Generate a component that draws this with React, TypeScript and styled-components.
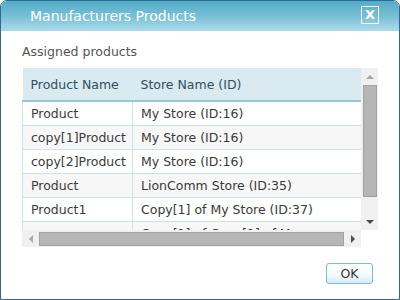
import styled, { createGlobalStyle } from "styled-components";

const GlobalStyle = createGlobalStyle`
  html, body {
    margin: 0;
    padding: 0;
    background: #ffffff;
  }
  body {
    font-family: "DejaVu Sans", Verdana, sans-serif;
  }
`;

const Dialog = styled.div`
  width: 400px;
  height: 300px;
  box-sizing: border-box;
  border: 1px solid #2f6890;
  border-radius: 7px 7px 0 0;
  overflow: hidden;
  display: flex;
  flex-direction: column;
  background: #ffffff;
`;

const TitleBar = styled.div`
  height: 30px;
  flex: none;
  display: flex;
  align-items: center;
  justify-content: space-between;
  padding: 0 20px 0 29px;
  background: linear-gradient(to bottom, #52abc6 0%, #7cc2d8 55%, #acdbea 100%);
`;

const Title = styled.span`
  color: #ffffff;
  font-size: 14px;
`;

const CloseButton = styled.button`
  width: 18px;
  height: 18px;
  padding: 0;
  margin: 0 0 2px 0;
  border: 1px solid #ffffff;
  background: transparent;
  color: #ffffff;
  font-family: "DejaVu Sans", sans-serif;
  font-weight: bold;
  font-size: 13px;
  line-height: 16px;
  text-align: center;
  cursor: pointer;
`;

const Body = styled.div`
  flex: 1;
  display: flex;
  flex-direction: column;
  padding: 13px 21px 0 21px;
`;

const Label = styled.div`
  font-size: 12.5px;
  line-height: 16px;
  color: #555555;
  margin-bottom: 8px;
`;

const GridFrame = styled.div`
  width: 356px;
  height: 179px;
  display: grid;
  grid-template-columns: 339px 17px;
  grid-template-rows: 162px 17px;
`;

const Viewport = styled.div`
  overflow: hidden;
  background: #ffffff;
`;

const Table = styled.table`
  border-collapse: collapse;
  width: 339px;
  table-layout: fixed;
  font-size: 12.5px;
  color: #3a3a3a;
`;

const HeadCell = styled.th<{ $w?: number }>`
  width: ${(p) => (p.$w ? `${p.$w}px` : "auto")};
  height: 32px;
  padding: 0 8px;
  text-align: left;
  font-weight: normal;
  color: #2f4f5f;
  background: #d9eaf1;
  border-bottom: 2px solid #92c9d2;
  white-space: nowrap;
`;

const Row = styled.tr<{ $alt: boolean }>`
  background: ${(p) => (p.$alt ? "#f7f7f7" : "#ffffff")};
`;

const Cell = styled.td`
  padding: 4px 8px;
  line-height: 15px;
  vertical-align: middle;
  border-bottom: 1px solid #cfe2e5;
  border-left: 1px solid #cfe2e5;
`;

const CellText = styled.span`
  display: block;
  max-width: 180px;
`;

const Corner = styled.div`
  background: #ffffff;
`;

const VTrack = styled.div`
  background: #f0f0f0;
  display: flex;
  flex-direction: column;
  align-items: center;
`;

const HTrack = styled.div`
  background: #f0f0f0;
  display: flex;
  align-items: center;
`;

const ArrowBox = styled.div`
  width: 17px;
  height: 17px;
  flex: none;
  display: flex;
  align-items: center;
  justify-content: center;
`;

const Spacer = styled.div`
  flex: 1;
`;

const VThumb = styled.div`
  width: 12px;
  height: 110px;
  flex: none;
  background: #b6b6b6;
  border: 1px solid #a2a2a2;
`;

const HThumb = styled.div`
  height: 12px;
  flex: 1;
  background: #b6b6b6;
  border: 1px solid #a2a2a2;
`;

const Footer = styled.div`
  display: flex;
  justify-content: flex-end;
  padding: 16px 5px 0 0;
`;

const OkButton = styled.button`
  width: 47px;
  height: 21px;
  padding: 0;
  border: 1px solid #7dbcd3;
  border-radius: 3px;
  background: linear-gradient(to bottom, #ffffff 0%, #f6fbfd 55%, #d6ebf3 100%);
  font-family: "DejaVu Sans", sans-serif;
  font-size: 12.5px;
  color: #333333;
  cursor: pointer;
`;

type Dir = "up" | "down" | "left" | "right";

function Arrow({ dir, dark }: { dir: Dir; dark?: boolean }) {
  const pts: Record<Dir, string> = {
    up: "0,4 4,0 8,4",
    down: "0,0 8,0 4,4",
    left: "4,0 4,8 0,4",
    right: "0,0 0,8 4,4",
  };
  const vertical = dir === "up" || dir === "down";
  return (
    <svg width={vertical ? 8 : 4} height={vertical ? 4 : 8}>
      <polygon points={pts[dir]} fill={dark ? "#4a4a4a" : "#a8a8a8"} />
    </svg>
  );
}

const rows = [
  { product: "Product", store: "My Store (ID:16)" },
  { product: "copy[1]Product", store: "My Store (ID:16)" },
  { product: "copy[2]Product", store: "My Store (ID:16)" },
  { product: "Product", store: "LionComm Store (ID:35)" },
  { product: "Product1", store: "Copy[1] of My Store (ID:37)" },
  { product: "Product1", store: "Copy[1] of Copy[1] of My Store (ID:38)" },
];

export default function App() {
  return (
    <>
      <GlobalStyle />
      <Dialog>
        <TitleBar>
          <Title>Manufacturers Products</Title>
          <CloseButton>X</CloseButton>
        </TitleBar>
        <Body>
          <Label>Assigned products</Label>
          <GridFrame>
            <Viewport>
              <Table>
                <thead>
                  <tr>
                    <HeadCell $w={94}>Product Name</HeadCell>
                    <HeadCell>Store Name (ID)</HeadCell>
                  </tr>
                </thead>
                <tbody>
                  {rows.map((r, i) => (
                    <Row key={i} $alt={i % 2 === 1}>
                      <Cell>{r.product}</Cell>
                      <Cell>
                        <CellText>{r.store}</CellText>
                      </Cell>
                    </Row>
                  ))}
                </tbody>
              </Table>
            </Viewport>
            <VTrack>
              <ArrowBox>
                <Arrow dir="up" />
              </ArrowBox>
              <VThumb />
              <Spacer />
              <ArrowBox>
                <Arrow dir="down" dark />
              </ArrowBox>
            </VTrack>
            <HTrack>
              <ArrowBox>
                <Arrow dir="left" />
              </ArrowBox>
              <HThumb />
              <ArrowBox>
                <Arrow dir="right" dark />
              </ArrowBox>
            </HTrack>
            <Corner />
          </GridFrame>
          <Footer>
            <OkButton>OK</OkButton>
          </Footer>
        </Body>
      </Dialog>
    </>
  );
}
